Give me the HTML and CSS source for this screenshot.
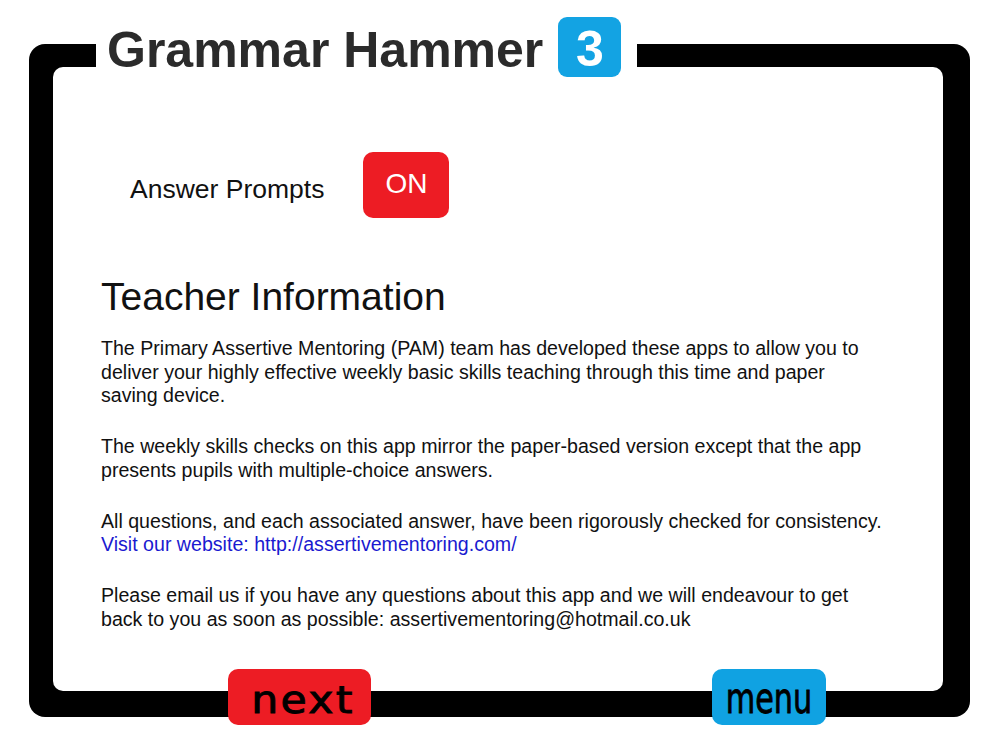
FILE: index.html
```html
<!DOCTYPE html>
<html lang="en">
<head>
<meta charset="utf-8">
<title>Grammar Hammer 3</title>
<link rel="stylesheet" href="styles.css">
</head>
<body>
<div class="page">
  <div class="frame">
    <header class="masthead">
      <h1 class="title">Grammar Hammer</h1>
      <span class="badge">3</span>
    </header>
    <main class="panel">
      <div class="prompt-row">
        <span class="prompt-label">Answer Prompts</span>
        <button class="toggle">ON</button>
      </div>
      <h2 class="heading">Teacher Information</h2>
      <p class="info">The Primary Assertive Mentoring (PAM) team has developed these apps to allow you to deliver your highly effective weekly basic skills teaching through this time and paper saving device.</p>
      <p class="info">The weekly skills checks on this app mirror the paper-based version except that the app presents pupils with multiple-choice answers.</p>
      <p class="info">All questions, and each associated answer, have been rigorously checked for consistency.<br><span class="link">Visit our website: http://assertivementoring.com/</span></p>
      <p class="info">Please email us if you have any questions about this app and we will endeavour to get back to you as soon as possible: assertivementoring@hotmail.co.uk</p>
    </main>
    <nav class="footer">
      <button class="btn btn-next"><span class="btn-text">next</span></button>
      <button class="btn btn-menu"><span class="btn-text">menu</span></button>
    </nav>
  </div>
</div>
</body>
</html>
```

FILE: styles.css
```css
* { box-sizing: border-box; }

html, body {
  margin: 0;
  padding: 0;
  background: #ffffff;
}

body {
  font-family: "Liberation Sans", Arial, sans-serif;
  color: #111111;
  width: 1000px;
  height: 750px;
  overflow: hidden;
}

.page {
  padding: 44px 0 0 29px;
}

.frame {
  position: relative;
  width: 941px;
  height: 673px;
  background: #000000;
  border-radius: 16px;
  padding: 23px 27px 26px 24px;
}

.masthead {
  position: absolute;
  left: 67px;
  top: -27px;
  height: 60px;
  display: flex;
  align-items: flex-start;
  background: #ffffff;
  padding: 0 16px 0 11px;
}

.title {
  margin: 8px 0 0 0;
  font-family: "Liberation Sans", Arial, sans-serif;
  font-weight: 700;
  font-size: 50px;
  line-height: 50px;
  color: #2b2b2b;
  white-space: nowrap;
}

.badge {
  margin-left: 15px;
  width: 63px;
  height: 60px;
  border-radius: 9px;
  background: #13a3e3;
  color: #ffffff;
  font-weight: 700;
  font-size: 50px;
  display: flex;
  align-items: center;
  justify-content: center;
  padding-top: 4px;
  line-height: 1;
}

.panel {
  height: 100%;
  background: #ffffff;
  border-radius: 10px;
  padding: 85px 0 0 48px;
}

.prompt-row {
  display: flex;
  align-items: center;
  gap: 39px;
  margin-left: 29px;
  height: 66px;
}

.prompt-label {
  font-size: 26.5px;
  color: #111111;
  padding-top: 9px;
}

.toggle {
  width: 86px;
  height: 66px;
  border: none;
  border-radius: 10px;
  background: #ed1c24;
  color: #ffffff;
  font-family: "Liberation Sans", Arial, sans-serif;
  font-size: 28px;
  padding: 0 0 3px 0;
}

.heading {
  margin: 57px 0 0 0;
  font-weight: 400;
  font-size: 39px;
  line-height: 44px;
  color: #111111;
}

.info {
  margin: 27.5px 0 0 0;
  width: 783px;
  font-size: 19.6px;
  line-height: 23.5px;
  color: #111111;
}

.heading + .info {
  margin-top: 18px;
}

.link {
  color: #1a1ad0;
}

.footer {
  position: absolute;
  left: 199px;
  top: 625px;
  display: flex;
  gap: 341px;
}

.btn {
  height: 56px;
  border: none;
  border-radius: 10px;
  padding: 0;
  display: flex;
  align-items: center;
  justify-content: center;
  color: #000000;
}

.btn-next {
  width: 143px;
  background: #ed1c24;
}

.btn-next .btn-text {
  display: inline-block;
  font-family: "DejaVu Sans", sans-serif;
  font-weight: 400;
  font-size: 37px;
  letter-spacing: 2px;
  transform: scaleX(1.15);
  margin-left: 6px;
  padding-top: 6px;
  -webkit-text-stroke: 0.9px #000000;
}

.btn-menu {
  width: 114px;
  background: #10a2e2;
}

.btn-menu .btn-text {
  display: inline-block;
  font-family: "DejaVu Sans Condensed", "DejaVu Sans", sans-serif;
  font-size: 42px;
  transform: scaleX(0.8);
  padding-top: 2px;
  -webkit-text-stroke: 0.8px #000000;
}
```
